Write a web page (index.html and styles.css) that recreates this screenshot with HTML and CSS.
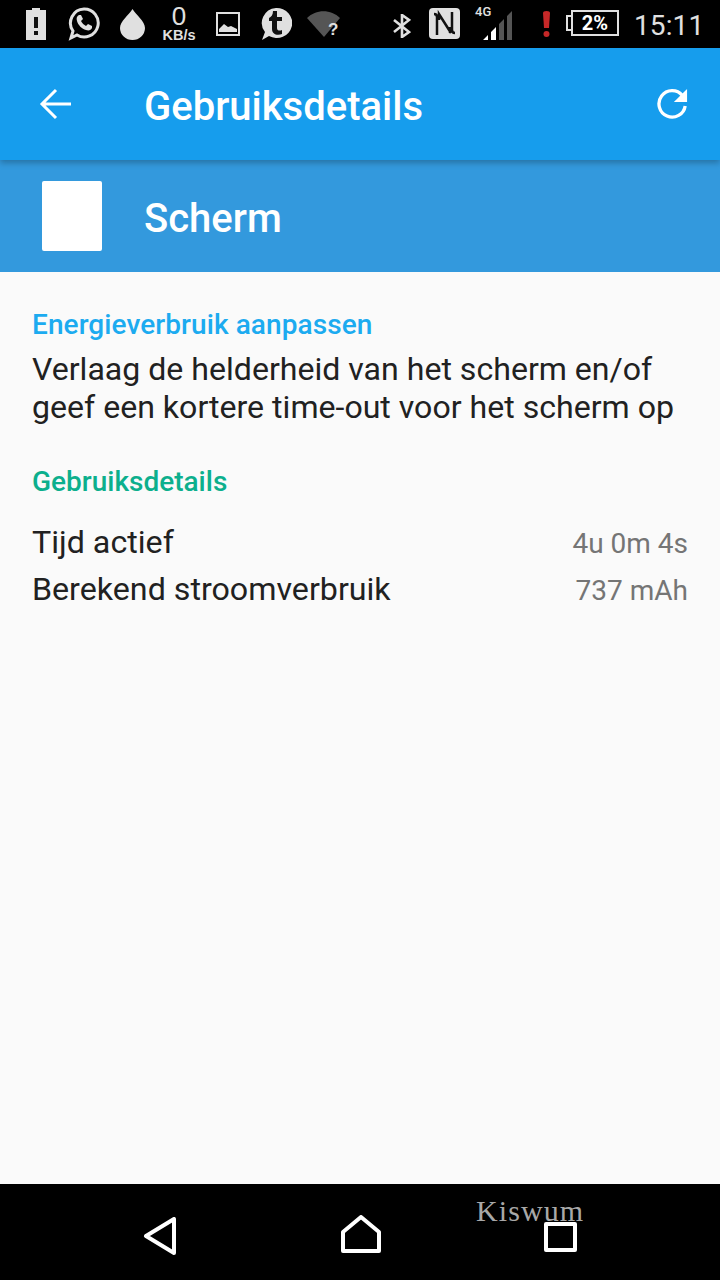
FILE: index.html
```html
<!DOCTYPE html>
<html>
<head>
    <meta charset="utf-8" />
    <title>Gebruiksdetails</title>
    <link rel="stylesheet" href="styles.css">
</head>
<body>
    <div class="phone">
        <div class="statusbar">
            <svg class="st st-batalert" width="20" height="32" viewBox="0 0 20 32">
                <path fill="#e0e0e0" d="M6 0h8v2h6v30H0V2h6z"/>
                <path fill="#111" d="M8 9h4v11H8zM8 23h4v4H8z"/>
            </svg>
            <svg class="st st-whatsapp" width="32" height="34" viewBox="0 0 32 34">
                <path fill="none" stroke="#e0e0e0" stroke-width="3" d="M16 2a14 14 0 1 1-7 26l-6 3 2-7A14 14 0 0 1 16 2z"/>
                <path fill="#e0e0e0" d="M11 8c-2 1-3 3-2 6 1 4 5 8 9 9 3 1 5 0 6-2l0-2-4-2-2 2c-2-1-4-3-5-5l2-2-2-4z"/>
            </svg>
            <svg class="st st-drop" width="25" height="31" viewBox="0 0 25 31">
                <path fill="#e0e0e0" d="M12.500 0C9 6 0 12 0 19a12.500 12 0 0 0 25 0C25 12 16 6 12.500 0z"/>
            </svg>
            <div class="st st-speed">
                <span class="speed-num">0</span>
                <span class="speed-unit">KB/s</span>
            </div>
            <svg class="st st-image" width="24" height="24" viewBox="0 0 24 24">
                <path fill="none" stroke="#e0e0e0" stroke-width="2" d="M1 1h22v22H1z"/>
                <path fill="#e0e0e0" d="M3 20v-3l5-5 4 3 3-1 6 3v3z"/>
            </svg>
            <svg class="st st-tumblr" width="32" height="34" viewBox="0 0 32 34">
                <path fill="#e0e0e0" d="M16 1a15.500 15 0 1 1-7 28l-7 4 3-8A15.500 15 0 0 1 16 1z"/>
                <path fill="#111" d="M13 4h4v6h5v4h-5v7c0 3 3 3 5 2v4c-5 2-10 0-10-5v-8h-3v-3c2-1 4-3 4-7z"/>
            </svg>
            <svg class="st st-wifi" width="33" height="28" viewBox="0 0 33 28">
                <path fill="#555" d="M0 7C9-2 24-2 33 7L17 26z"/>
                <text class="wifi-q" x="21" y="24">?</text>
            </svg>
            <svg class="st st-bt" width="18" height="24" viewBox="0 0 18 24">
                <path fill="none" stroke="#e0e0e0" stroke-width="2.600" d="M1 6l15 12-7 5V1l7 5L1 18"/>
            </svg>
            <svg class="st st-nfc" width="31" height="31" viewBox="0 0 31 31">
                <rect width="31" height="31" rx="4" fill="#e0e0e0"/>
                <path fill="none" stroke="#111" stroke-width="2.500" d="M5 6c2 0 3 1 3 3v18M10 12v-6l12 19M21 19v6M26 25c-2 0-3-1-3-3V4"/>
            </svg>
            <div class="st st-signal">
                <span class="net">4G</span>
                <svg width="30" height="30" viewBox="0 0 30 30">
                    <path fill="#fff" d="M0 30l5-5v5zM8 30V22l5-5v13z"/>
                    <path fill="#555" d="M16 30V14l5-5v21zM24 30V6l5-5v29z"/>
                </svg>
            </div>
            <svg class="st st-warn" width="9" height="26" viewBox="0 0 9 26">
                <path fill="#c62828" d="M1 2a3.500 2 0 0 1 7 0l-1 15H2z"/>
                <circle cx="4.500" cy="23" r="3" fill="#c62828"/>
            </svg>
            <div class="st st-battery">
                <span class="bat-tip"></span>
                <span class="bat-body">2%</span>
            </div>
            <span class="clock">15:11</span>
        </div>

        <div class="toolbar">
            <svg class="back" width="33" height="32" viewBox="0 0 33 32">
                <path fill="none" stroke="#fff" stroke-width="3" d="M32 16H4M17 2L3 16l14 14"/>
            </svg>
            <span class="toolbar-title">Gebruiksdetails</span>
            <svg class="refresh" width="32" height="32" viewBox="0 0 34 34">
                <path fill="none" stroke="#fff" stroke-width="3.500" d="M28 8A14 14 0 1 0 31 19"/>
                <path fill="#fff" d="M33 1v14H19z"/>
            </svg>
        </div>

        <div class="subheader">
            <div class="app-icon"></div>
            <span class="subheader-title">Scherm</span>
        </div>

        <div class="content">
            <h2 class="section blue">Energieverbruik aanpassen</h2>
            <p class="advice">Verlaag de helderheid van het scherm en/of geef een kortere time-out voor het scherm op</p>
            <h2 class="section green">Gebruiksdetails</h2>
            <div class="row">
                <span class="label">Tijd actief</span>
                <span class="value">4u 0m 4s</span>
            </div>
            <div class="row">
                <span class="label">Berekend stroomverbruik</span>
                <span class="value">737 mAh</span>
            </div>
        </div>

        <div class="navbar">
            <svg class="nav-back" width="34" height="38" viewBox="0 0 34 38">
                <path fill="none" stroke="#fff" stroke-width="4" stroke-linejoin="round" d="M31 2v34L3 19z"/>
            </svg>
            <svg class="nav-home" width="40" height="38" viewBox="0 0 40 38">
                <path fill="none" stroke="#fff" stroke-width="4" stroke-linejoin="round" d="M2 36V17L20 2l18 15v19z"/>
            </svg>
            <div class="nav-square"></div>
            <span class="watermark">Kiswum</span>
        </div>
    </div>
</body>
</html>
```

FILE: styles.css
```css
* {
    box-sizing: border-box;
}
body {
    margin: 0;
    font-family: Roboto, sans-serif;
    background: #fafafa;
}
.phone {
    width: 720px;
    height: 1280px;
    display: flex;
    flex-direction: column;
    overflow: hidden;
}
.statusbar {
    height: 48px;
    background: #000;
    display: flex;
    align-items: flex-start;
    color: #e0e0e0;
}
.st {
    flex: none;
    display: block;
}
.st-batalert { margin: 8px 0 0 26px; }
.st-whatsapp { margin: 7px 0 0 22px; }
.st-drop { margin: 9px 0 0 20px; }
.st-speed {
    margin: 4px 0 0 17px;
    width: 34px;
    display: flex;
    flex-direction: column;
    align-items: center;
    font-family: "Liberation Sans", sans-serif;
    font-weight: bold;
}
.speed-num {
    font-size: 26px;
    line-height: 25px;
    font-weight: normal;
}
.speed-unit {
    font-size: 14.500px;
    line-height: 13px;
}
.st-image { margin: 12px 0 0 20px; }
.st-tumblr { margin: 7px 0 0 20px; }
.st-wifi { margin: 11px 0 0 15px; }
.wifi-q {
    font-family: "Liberation Sans", sans-serif;
    font-size: 17px;
    font-weight: bold;
    fill: #e0e0e0;
}
.st-bt { margin: 14px 0 0 53px; }
.st-nfc { margin: 8px 0 0 18px; }
.st-signal {
    margin: 6px 0 0 15px;
    width: 38px;
    height: 34px;
    position: relative;
}
.st-signal svg {
    position: absolute;
    left: 8px;
    top: 4px;
}
.net {
    position: absolute;
    left: 0;
    top: 0;
    font-size: 13px;
    line-height: 12px;
    font-weight: 500;
}
.st-warn { margin: 11px 0 0 29px; }
.st-battery {
    margin: 10px 0 0 15px;
    display: flex;
    align-items: center;
    height: 26px;
}
.bat-tip {
    width: 5px;
    height: 16px;
    border: 2px solid #e0e0e0;
    border-right: 0;
}
.bat-body {
    width: 48px;
    height: 26px;
    border: 2px solid #e0e0e0;
    color: #fff;
    font-size: 20px;
    font-weight: 700;
    line-height: 22px;
    text-align: center;
}
.clock {
    margin: 9px 0 0 15px;
    font-size: 28px;
    line-height: 34px;
    letter-spacing: 0.100px;
}

.toolbar {
    height: 112px;
    background: #169ded;
    display: flex;
    align-items: center;
    color: #fff;
    position: relative;
    box-shadow: 0 3px 6px rgba(0,0,0,0.25);
}
.back {
    margin-left: 39px;
    flex: none;
}
.toolbar-title {
    margin-left: 72px;
    font-size: 40px;
    font-weight: 500;
    padding-top: 4px;
}
.refresh {
    margin-left: auto;
    margin-right: 32px;
}
.subheader {
    height: 112px;
    background: #3399dd;
    display: flex;
    align-items: center;
    color: #fff;
}
.app-icon {
    width: 60px;
    height: 70px;
    margin-left: 42px;
    background: #fff;
    border-radius: 2px;
}
.subheader-title {
    margin-left: 42px;
    font-size: 40px;
    font-weight: 500;
    padding-top: 4px;
}

.content {
    flex: 1;
    background: #fafafa;
    padding: 36px 32px 0;
}
.section {
    margin: 0;
    font-size: 28px;
    line-height: 34px;
    font-weight: 500;
}
.blue {
    color: #1cabf0;
    margin-bottom: 8px;
    letter-spacing: 0.080px;
}
.green {
    color: #0caf8d;
    margin-top: 39px;
    margin-bottom: 19px;
}
.advice {
    margin: 0;
    font-size: 32.100px;
    line-height: 38px;
    color: #212121;
}
.row {
    display: flex;
    justify-content: space-between;
    align-items: center;
    height: 47px;
}
.label {
    font-size: 32.200px;
    color: #212121;
}
.value {
    font-size: 28px;
    color: #757575;
    padding-top: 4px;
}

.navbar {
    height: 96px;
    background: #000;
    display: flex;
    align-items: flex-start;
    position: relative;
}
.nav-back { margin: 33px 0 0 143px; }
.nav-home { margin: 31px 0 0 164px; }
.nav-square {
    width: 33px;
    height: 30px;
    margin: 38px 0 0 163px;
    border: 4px solid #fff;
    border-radius: 2px;
}
.watermark {
    position: absolute;
    left: 476px;
    top: 10px;
    font-family: "Liberation Serif", serif;
    font-size: 30px;
    line-height: 34px;
    color: #a8a8a8;
    letter-spacing: 1.100px;
}
```
